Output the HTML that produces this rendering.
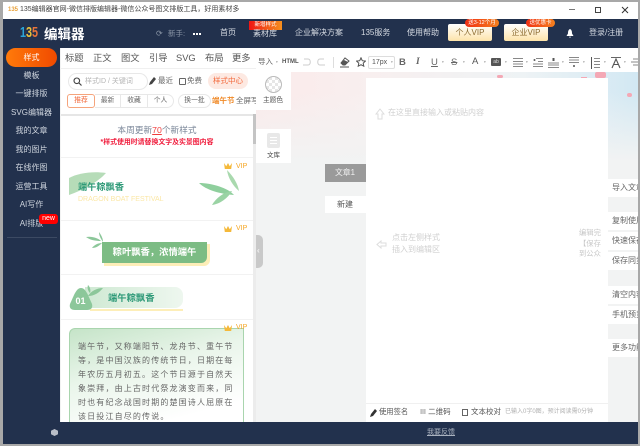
<!DOCTYPE html>
<html><head><meta charset="utf-8">
<style>
*{box-sizing:border-box}
html,body{margin:0;padding:0;width:640px;height:446px;overflow:hidden;background:#a8a8a8;font-family:"Liberation Sans","Noto Sans CJK SC",sans-serif}
.a{position:absolute;white-space:nowrap}
#root{position:relative;width:640px;height:446px;overflow:hidden}
.nav{color:#d5dae2;font-size:8px;top:27px;line-height:12px}
.side{left:3px;width:57px;text-align:center;color:#cfd5de;font-size:8px;line-height:14px}
.tab{top:51px;font-size:9.3px;line-height:14px;color:#555}
.rb{left:608px;width:30px;height:18px;background:#fff;color:#666;font-size:8px;line-height:18px;padding-left:4px;overflow:hidden}
.vip{color:#f5a623;font-size:7px;left:236px;line-height:10px}
.crown{left:224px;width:8px;height:6px;background:#f5b93a;clip-path:polygon(0 0,28% 55%,50% 0,72% 55%,100% 0,90% 100%,10% 100%)}
.tb{font-size:9.5px;color:#666;top:56px;line-height:13px}
.ic{position:absolute;top:57px}
.dot{left:0;top:60px;font-size:3.5px;line-height:5px;color:#999}
.ph{color:#d0d0d0;font-size:8px;line-height:12px}
.sep{left:61px;width:192px;height:1px;background:#f2f2f2}
.fl{top:94px;height:14px;border:1px solid #e8e8e8;border-left:0;color:#666;font-size:6.8px;line-height:12px;text-align:center}
</style></head><body><div id="root">
<!-- title -->
<div class="a" style="left:3px;top:2px;width:635px;height:17px;background:#fff"></div>
<div class="a" style="left:8px;top:6px;font-size:6px;line-height:8px;font-weight:bold;color:#e9a23b">135</div>
<div class="a" style="left:20px;top:4px;font-size:7px;line-height:12px;color:#444">135编辑器官网-微信排版编辑器-微信公众号图文排版工具，好用素材多</div>
<div class="a" style="left:569px;top:9px;width:6px;height:1px;background:#777"></div>
<div class="a" style="left:595px;top:7px;width:6px;height:6px;border:1px solid #444"></div>
<svg class="a" style="left:621px;top:6px" width="8" height="8"><path d="M1 1L7 7M7 1L1 7" stroke="#333" stroke-width="1"/></svg>
<!-- nav -->
<div class="a" style="left:3px;top:19px;width:635px;height:425px;background:#22314d"></div>
<div class="a" style="left:20px;top:24px;width:26px;font-size:15px;font-weight:bold;line-height:18px;transform:scaleX(.72);transform-origin:0 0"><span style="color:#2aa5d8">1</span><span style="color:#e9c13a">3</span><span style="color:#e8743a">5</span></div>
<div class="a" style="left:44px;top:26px;font-size:13.5px;font-weight:bold;line-height:18px;color:#fff">编辑器</div>
<div class="a" style="left:156px;top:27px;font-size:8px;color:#8c97a8;line-height:13px">⟳</div>
<div class="a" style="left:168px;top:27px;font-size:7.5px;color:#8c97a8;line-height:13px">新手:</div>
<div class="a" style="left:193px;top:33px;width:8px;height:2px;background:repeating-linear-gradient(90deg,#fff 0 2px,transparent 2px 3px)"></div>
<div class="a nav" style="left:220px">首页</div>
<div class="a" style="left:249px;top:21px;width:33px;height:9px;background:linear-gradient(90deg,#f01414,#f5901e);color:#fff;font-size:5.5px;line-height:9px;text-align:center">新增样式</div>
<div class="a nav" style="left:253px;top:28px">素材库</div>
<div class="a nav" style="left:295px">企业解决方案</div>
<div class="a nav" style="left:361px">135服务</div>
<div class="a nav" style="left:407px">使用帮助</div>
<div class="a" style="left:448px;top:24px;width:44px;height:17px;background:linear-gradient(#fff,#fde3aa);border-radius:2px;color:#8a6a30;font-size:8px;line-height:18px;text-align:center">个人VIP</div>
<div class="a" style="left:465px;top:19px;width:34px;height:8px;background:linear-gradient(90deg,#f03014,#f5801e);border-radius:4px;color:#fff;font-size:5.5px;line-height:8px;text-align:center">送3-12个月</div>
<div class="a" style="left:504px;top:24px;width:44px;height:17px;background:linear-gradient(#fff,#fde3aa);border-radius:2px;color:#8a6a30;font-size:8px;line-height:18px;text-align:center">企业VIP</div>
<div class="a" style="left:526px;top:19px;width:29px;height:8px;background:linear-gradient(90deg,#f03014,#f5801e);border-radius:4px;color:#fff;font-size:5.5px;line-height:8px;text-align:center">送优惠卡</div>
<svg class="a" style="left:566px;top:29px" width="8" height="9"><path d="M4 0C2 1 2 3 2 4.5L.5 7H7.5L6 4.5C6 3 6 1 4 0ZM3 7.8H5L4 9Z" fill="#fff"/></svg>
<div class="a nav" style="left:589px">登录/注册</div>
<!-- sidebar -->
<div class="a" style="left:6px;top:48px;width:51px;height:19px;border-radius:9.5px;background:linear-gradient(90deg,#ff7a0a,#f04a00);color:#fff;font-size:8px;line-height:19px;text-align:center">样式</div>
<div class="a side" style="top:69px">模板</div>
<div class="a side" style="top:87px">一键排版</div>
<div class="a side" style="top:106px">SVG编辑器</div>
<div class="a side" style="top:124px">我的文章</div>
<div class="a side" style="top:143px">我的图片</div>
<div class="a side" style="top:161px">在线作图</div>
<div class="a side" style="top:180px">运营工具</div>
<div class="a side" style="top:198px">AI写作</div>
<div class="a side" style="top:217px">AI排版</div>
<div class="a" style="left:39px;top:214px;width:19px;height:10px;background:#f00;border-radius:3px;color:#fff;font-size:7px;line-height:10px;text-align:center">new</div>
<div class="a" style="left:7px;top:237px;width:50px;height:1px;background:#3c4a63"></div>
<svg class="a" style="left:51px;top:429px" width="7" height="7"><path d="M3.5 0L7 1.7V5.3L3.5 7L0 5.3V1.7Z" fill="#b9bec8"/></svg>
<div class="a" style="left:427px;top:427px;font-size:7px;line-height:12px;color:#aab2bf;text-decoration:underline">我要反馈</div>
<!-- main bg -->
<div class="a" style="left:60px;top:48px;width:578px;height:374px;background:#f2f3f3"></div>
<!-- left panel -->
<div class="a" style="left:61px;top:48px;width:195px;height:374px;background:#fff"></div>
<div class="a tab" style="left:65px">标题</div>
<div class="a tab" style="left:93px">正文</div>
<div class="a tab" style="left:121px">图文</div>
<div class="a tab" style="left:149px">引导</div>
<div class="a tab" style="left:176px">SVG</div>
<div class="a tab" style="left:205px">布局</div>
<div class="a tab" style="left:232px">更多</div>
<div class="a" style="left:61px;top:68px;width:195px;height:1px;background:#f0f0f0"></div>
<div class="a" style="left:68px;top:73px;width:80px;height:17px;border:1px solid #e8e8e8;border-radius:9px"></div>
<svg class="a" style="left:73px;top:77px" width="9" height="9"><circle cx="3.8" cy="3.8" r="2.8" fill="none" stroke="#444" stroke-width="1.1"/><path d="M6 6L8.5 8.5" stroke="#444" stroke-width="1.2"/></svg>
<div class="a" style="left:85px;top:76px;font-size:7px;line-height:11px;color:#b5b5b5">样式ID / 关键词</div>
<svg class="a" style="left:149px;top:77px" width="8" height="8"><path d="M0 8L1 5L5 0L7 2L3 7Z" fill="#444"/></svg>
<div class="a" style="left:158px;top:75px;font-size:7.5px;line-height:12px;color:#666">最近</div>
<div class="a" style="left:179px;top:78px;width:7px;height:7px;border:1px solid #666;border-radius:1px"></div>
<div class="a" style="left:187px;top:75px;font-size:7.5px;line-height:12px;color:#666">免费</div>
<div class="a" style="left:208px;top:73px;width:40px;height:16px;border-radius:8px;background:#fde9e2;color:#f2683a;font-size:7.5px;line-height:16px;text-align:center">样式中心</div>
<div class="a" style="left:67px;top:94px;width:28px;height:14px;border:1px solid #f5a47c;border-radius:3px;color:#f2683a;font-size:6.8px;line-height:12px;text-align:center">推荐</div>
<div class="a fl" style="left:95px;width:26px">最新</div>
<div class="a fl" style="left:121px;width:27px">收藏</div>
<div class="a fl" style="left:148px;width:26px;border-radius:0 7px 7px 0">个人</div>
<div class="a" style="left:178px;top:94px;width:33px;height:14px;border:1px solid #e8e8e8;border-radius:7px;color:#666;font-size:6.8px;line-height:12px;text-align:center">换一批</div>
<div class="a" style="left:212px;top:95px;font-size:7.5px;line-height:12px;color:#f08a28;font-weight:bold">端午节</div>
<div class="a" style="left:236px;top:95px;width:20px;overflow:hidden;font-size:7.5px;line-height:12px;color:#666">全屏写</div>
<div class="a" style="left:61px;top:114px;width:195px;height:2px;background:#e6e6e6"></div>
<div class="a" style="left:253px;top:116px;width:3px;height:306px;background:#ececec"></div>
<div class="a" style="left:253px;top:114px;width:3px;height:30px;background:#c4c4c4"></div>
<!-- promo -->
<div class="a" style="left:61px;top:124px;width:192px;text-align:center;font-size:8.7px;line-height:13px;color:#7a8698">本周更新<span style="color:#f03c3c;text-decoration:underline">70</span>个新样式</div>
<div class="a" style="left:61px;top:137px;width:192px;text-align:center;font-size:6.9px;line-height:11px;font-weight:bold;color:#f01c3c">*样式使用时请替换文字及实景图内容</div>
<div class="a sep" style="top:157px"></div>
<div class="a sep" style="top:220px"></div>
<div class="a sep" style="top:274px"></div>
<div class="a sep" style="top:319px"></div>
<!-- card 1 -->
<svg class="a" style="left:68px;top:170px" width="40" height="26"><path d="M1 8C10 3 25 1 38 3C30 12 15 20 1 25Z" fill="#b6dcb8"/></svg>
<div class="a" style="left:78px;top:180px;font-size:9.2px;line-height:14px;font-weight:bold;color:#2f9a78">端午粽飘香</div>
<div class="a" style="left:78px;top:195px;font-size:7px;line-height:9px;color:#fbe7a6">DRAGON BOAT FESTIVAL</div>
<svg class="a" style="left:198px;top:168px" width="45" height="40"><path d="M1 15C14 15 30 20 36 27C22 26 8 22 1 15Z" fill="#8fcf9d"/><path d="M29 2C35 8 40 16 41 23C35 18 30 10 29 2Z" fill="#a9d9ae"/><path d="M14 37C18 30 26 24 34 23C30 30 22 36 14 37Z" fill="#9ad3a4"/></svg>
<!-- card 2 -->
<svg class="a" style="left:85px;top:231px" width="22" height="18"><path d="M1 6C7 5 13 7 16 10C10 10 5 9 1 6Z" fill="#8cc79a"/><path d="M14 1C16 4 18 7 18 11C16 8 14 5 14 1Z" fill="#8cc79a"/><path d="M7 17C9 14 13 12 17 12C14 15 11 17 7 17Z" fill="#8cc79a"/></svg>
<div class="a" style="left:104px;top:244px;width:106px;height:22px;background:#fdeeb8;border-radius:0 0 6px 0"></div>
<div class="a" style="left:102px;top:242px;width:105px;height:21px;background:#7cbc84;border-radius:0 0 6px 0;color:#fff;font-size:9.3px;font-weight:bold;line-height:21px;text-align:center">粽叶飘香，浓情端午</div>
<!-- card 3 -->
<div class="a" style="left:85px;top:287px;width:98px;height:21px;border-radius:0 8px 8px 0;background:linear-gradient(90deg,#cfe9d3,#eef7ef)"></div>
<div class="a" style="left:90px;top:309px;width:93px;height:1.5px;background:#fdeeb8"></div>
<svg class="a" style="left:69px;top:287px" width="24" height="24"><path d="M12 1C15 1 17 4 19 8L23 17C24 21 22 23 18 23H6C2 23 0 21 1 17L5 8C7 4 9 1 12 1Z" fill="#8cc79a"/></svg>
<div class="a" style="left:69px;top:294px;width:23px;text-align:center;color:#fff;font-size:9px;font-weight:bold;line-height:14px">01</div>
<svg class="a" style="left:87px;top:284px" width="18" height="14"><path d="M1 12C4 7 10 4 16 4C12 9 7 12 1 12Z" fill="#8cc79a"/><path d="M1 1C3 3 4 6 3 9C1 7 0 4 1 1Z" fill="#8cc79a"/></svg>
<div class="a" style="left:108px;top:291px;font-size:9.3px;font-weight:bold;line-height:14px;color:#2f9a78">端午粽飘香</div>
<!-- card 4 -->
<div class="a" style="left:69px;top:328px;width:175px;height:94px;border:1px solid #a9d5ae;border-bottom:0;border-radius:6px 0 0 0;background:linear-gradient(165deg,#c5e4c8 0%,#e9f5ea 40%,#fff 85%)"></div>
<div class="a" style="left:78px;top:340px;width:157px;font-size:8px;line-height:13.9px;color:#666;white-space:normal;letter-spacing:1.15px">端午节，又称端阳节、龙舟节、重午节等，是中国汉族的传统节日，日期在每年农历五月初五。这个节日源于自然天象崇拜，由上古时代祭龙演变而来，同时也有纪念战国时期的楚国诗人屈原在该日投江自尽的传说。</div>
<!-- VIP -->
<div class="a crown" style="top:163px"></div><div class="a vip" style="top:162px">VIP</div>
<div class="a crown" style="top:226px"></div><div class="a vip" style="top:224px">VIP</div>
<div class="a crown" style="top:325px"></div><div class="a vip" style="top:323px">VIP</div>
<!-- collapse -->
<div class="a" style="left:256px;top:235px;width:7px;height:33px;background:#c9c9c9;border-radius:0 5px 5px 0"></div>
<div class="a" style="left:257px;top:246px;font-size:8px;line-height:10px;color:#fff">‹</div>
<!-- decorative band -->
<div class="a" style="left:256px;top:72px;width:382px;height:90px;background:linear-gradient(90deg,#fbeaea 0%,#f8efef 30%,#eef3f5 70%,#d2e8f3 100%)"></div>
<div class="a" style="left:256px;top:92px;width:382px;height:70px;background:linear-gradient(rgba(242,243,243,0),#f2f3f3)"></div>
<div class="a" style="left:595px;top:72px;width:11px;height:6px;background:#f4a8b5;border-radius:2px"></div>
<div class="a" style="left:497px;top:75px;width:6px;height:3px;background:#f4a8b5;border-radius:2px"></div>
<div class="a" style="left:581px;top:77px;width:6px;height:2px;background:#f4a8b5"></div>
<div class="a" style="left:627px;top:93px;width:5px;height:4px;background:#f4a8b5;border-radius:2px"></div>
<!-- toolbar -->
<div class="a" style="left:256px;top:48px;width:382px;height:24px;background:#fff"></div>
<div class="a" style="left:258px;top:56px;font-size:7.5px;line-height:12px;color:#666">导入</div>
<div class="a dot" style="left:276px">▾</div>
<div class="a" style="left:282px;top:58px;font-size:6px;line-height:9px;font-weight:bold;color:#555">HTML</div>
<svg class="ic" style="left:302px;top:58px" width="9" height="8"><path d="M2 1H6C9 1 9 7 6 7H1" fill="none" stroke="#ccc"/></svg>
<svg class="ic" style="left:317px;top:58px" width="9" height="8"><path d="M7 1H3C0 1 0 7 3 7H8" fill="none" stroke="#ccc"/></svg>
<div class="a" style="left:333px;top:57px;width:1px;height:11px;background:#ddd"></div>
<svg class="ic" style="left:340px;top:57px" width="10" height="11"><path d="M1 6L5 1L9 4L5 8H3Z" fill="none" stroke="#555"/><path d="M4 3L8 5L5 8H3L1 6Z" fill="#555"/><path d="M0 10H9" stroke="#555"/></svg>
<svg class="ic" style="left:356px;top:57px" width="10" height="10"><path d="M5 .8L6.3 3.7L9.4 4.1L7.2 6.2L7.8 9.2L5 7.7L2.2 9.2L2.8 6.2L.6 4.1L3.7 3.7Z" fill="none" stroke="#555"/></svg>
<div class="a" style="left:368px;top:56px;width:27px;height:13px;border:1px solid #ddd;border-radius:2px;background:#fff"></div>
<div class="a" style="left:372px;top:57px;font-size:7px;line-height:11px;color:#555">17px</div>
<div class="a dot" style="left:391px">▾</div>
<div class="a tb" style="left:399px;font-weight:bold">B</div>
<div class="a tb" style="left:416px;font-style:italic;font-family:'Liberation Serif',serif;font-weight:bold">I</div>
<div class="a tb" style="left:431px;text-decoration:underline">U</div>
<div class="a tb" style="left:451px;text-decoration:line-through">S</div>
<div class="a tb" style="left:472px;top:55px;color:#555">A</div>
<div class="a" style="left:491px;top:58px;width:10px;height:8px;background:#555;border-radius:1px;color:#ddd;font-size:5px;line-height:8px;text-align:center">ab</div>
<svg class="ic" style="left:513px;top:58px" width="10" height="9"><path d="M0 .5H10M0 3.5H10M0 6H10M0 8.5H10" stroke="#888"/></svg>
<svg class="ic" style="left:533px;top:58px" width="10" height="9"><path d="M3 .5H10M5 3.5H10M0 6H10M0 8.5H10" stroke="#888"/><circle cx="1.5" cy="2" r="1" fill="#555"/></svg>
<svg class="ic" style="left:548px;top:58px" width="11" height="10"><path d="M0 5H11M0 7H11M0 9.5H11" stroke="#888"/><path d="M5.5 0V3" stroke="#555" stroke-width="2"/></svg>
<svg class="ic" style="left:569px;top:57px" width="10" height="11"><path d="M0 .5H10M0 3H10M0 5.5H10" stroke="#888"/><circle cx="5" cy="9" r="1" fill="#555"/></svg>
<svg class="ic" style="left:590px;top:57px" width="10" height="12"><path d="M4 1.5H10M4 4.5H10M4 7.5H10M4 10.5H10" stroke="#888"/><path d="M1.5 0V12" stroke="#555"/></svg>
<svg class="ic" style="left:611px;top:57px" width="10" height="12"><path d="M0 .5H10" stroke="#666"/><path d="M1 11L5 2L9 11M3 7.5H7" fill="none" stroke="#555" stroke-width="1.1"/></svg>
<svg class="ic" style="left:631px;top:58px" width="7" height="9"><path d="M2 1H7M0 4H7M2 7H7" stroke="#888"/></svg>
<div class="a dot" style="left:442px">▾</div>
<div class="a dot" style="left:463px">▾</div>
<div class="a dot" style="left:484px">▾</div>
<div class="a dot" style="left:505px">▾</div>
<div class="a dot" style="left:526px">▾</div>
<div class="a dot" style="left:562px">▾</div>
<div class="a dot" style="left:583px">▾</div>
<div class="a dot" style="left:604px">▾</div>
<div class="a dot" style="left:624px">▾</div>
<!-- theme color / library -->
<div class="a" style="left:256px;top:72px;width:35px;height:38px;background:#fff"></div>
<div class="a" style="left:265px;top:76px;width:17px;height:17px;border:1px solid #bbb;border-radius:50%;background:repeating-conic-gradient(#e6e6e6 0 25%,#fff 0 50%) 0 0/6px 6px"></div>
<div class="a" style="left:263px;top:95px;font-size:6.7px;line-height:11px;color:#555">主题色</div>
<div class="a" style="left:256px;top:129px;width:35px;height:34px;background:#fff"></div>
<div class="a" style="left:267px;top:133px;width:13px;height:15px;background:#e8e8e8;border-radius:2px"></div>
<div class="a" style="left:270px;top:137px;width:7px;height:1px;background:#fff;box-shadow:0 3px 0 #fff,0 6px 0 #fff"></div>
<div class="a" style="left:267px;top:151px;font-size:6.5px;line-height:10px;color:#444">文库</div>
<!-- article tabs -->
<div class="a" style="left:325px;top:164px;width:41px;height:18px;background:#9a9a9a;color:#f2f2f2;font-size:7.8px;line-height:18px;padding-left:10px">文章1</div>
<div class="a" style="left:325px;top:196px;width:41px;height:17px;background:#fff;color:#555;font-size:8px;line-height:17px;padding-left:12px">新建</div>
<!-- editor -->
<div class="a" style="left:366px;top:78px;width:242px;height:344px;background:#fff"></div>
<svg class="a" style="left:375px;top:108px" width="10" height="12"><path d="M5 1L9 6H7V11H3V6H1Z" fill="none" stroke="#ddd"/></svg>
<div class="a ph" style="left:388px;top:107px">在这里直接输入或粘贴内容</div>
<svg class="a" style="left:376px;top:240px" width="11" height="9"><path d="M1 4.5L5 1V3H10V6H5V8Z" fill="none" stroke="#ddd"/></svg>
<div class="a ph" style="left:392px;top:232px">点击左侧样式<br>插入到编辑区</div>
<div class="a" style="left:579px;top:228px;width:22px;overflow:hidden;font-size:7.3px;line-height:10.5px;color:#c8c8c8">编辑完<br>【保存】<br>到公众</div>
<div class="a" style="left:366px;top:403px;width:242px;height:1px;background:#f0f0f0"></div>
<svg class="a" style="left:370px;top:409px" width="7" height="8"><path d="M0 8L1 5L5 0L7 2L3 7Z" fill="#333"/></svg>
<div class="a" style="left:379px;top:406px;font-size:7.3px;line-height:12px;color:#555">使用签名</div>
<div class="a" style="left:420px;top:406px;font-size:7.5px;line-height:12px;color:#555"><span style="font-size:6px;color:#777">▦</span> 二维码</div>
<div class="a" style="left:462px;top:409px;width:6px;height:7px;border:1px solid #666"></div>
<div class="a" style="left:471px;top:406px;font-size:7.5px;line-height:12px;color:#555">文本校对</div>
<div class="a" style="left:505px;top:406px;width:102px;overflow:hidden;font-size:6px;line-height:12px;color:#b0b0b0">已输入0字0图，预计阅读需0分钟</div>
<!-- right -->
<div class="a rb" style="top:179px">导入文章</div>
<div class="a rb" style="top:212px">复制使用</div>
<div class="a rb" style="top:232px">快速保存</div>
<div class="a rb" style="top:252px">保存同步</div>
<div class="a rb" style="top:286px">清空内容</div>
<div class="a rb" style="top:306px">手机预览</div>
<div class="a rb" style="top:339px">更多功能</div>
</div></body></html>
